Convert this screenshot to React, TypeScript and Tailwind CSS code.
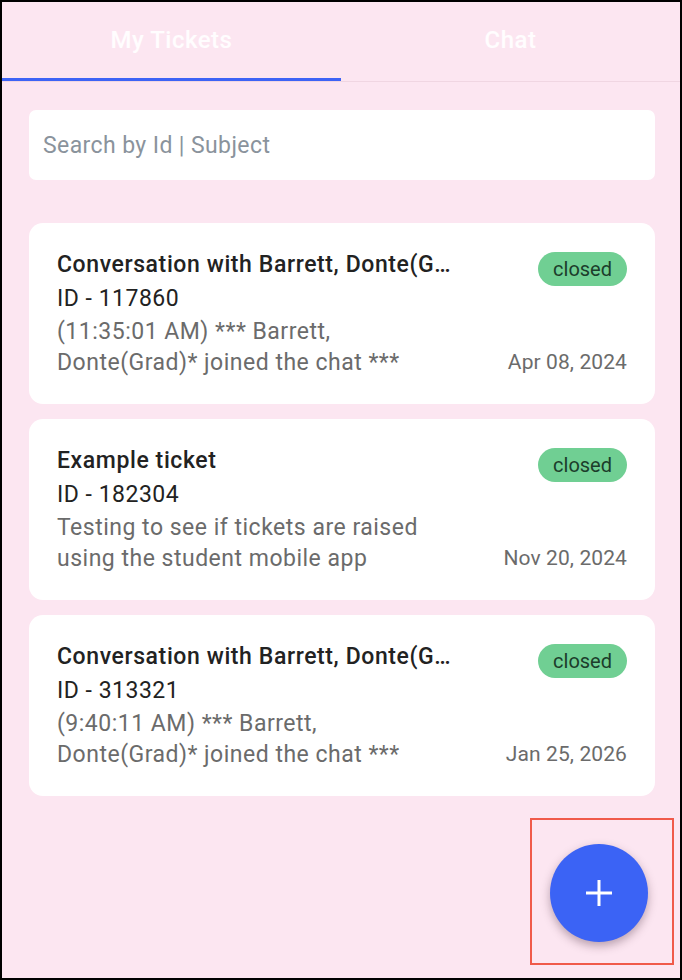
import { useState } from "react";

const tickets = [
  {
    id: "117860",
    subject: "Conversation with Barrett, Donte(Grad)",
    preview: "(11:35:01 AM) *** Barrett, Donte(Grad)* joined the chat ***",
    status: "closed",
    date: "Apr 08, 2024",
  },
  {
    id: "182304",
    subject: "Example ticket",
    preview: "Testing to see if tickets are raised using the student mobile app",
    status: "closed",
    date: "Nov 20, 2024",
  },
  {
    id: "313321",
    subject: "Conversation with Barrett, Donte(Grad)",
    preview: "(9:40:11 AM) *** Barrett, Donte(Grad)* joined the chat ***",
    status: "closed",
    date: "Jan 25, 2026",
  },
];

export default function App() {
  const [tab, setTab] = useState("tickets");
  const [query, setQuery] = useState("");

  return (
    <div
      className="relative w-[682px] h-[980px] border-2 border-black bg-[#fce6f1] overflow-hidden"
      style={{ fontFamily: "Roboto, 'Liberation Sans', sans-serif" }}
    >
      {/* tabs */}
      <div className="flex border-b border-[#f0d6e2]">
        {[
          { key: "tickets", label: "My Tickets" },
          { key: "chat", label: "Chat" },
        ].map((t) => (
          <button
            key={t.key}
            onClick={() => setTab(t.key)}
            className="flex-1 flex flex-col"
          >
            <span className="h-[76px] flex items-center justify-center text-[24px] tracking-[0.5px] font-medium text-white/90">
              {t.label}
            </span>
            <span className={`h-[3px] w-full ${tab === t.key ? "bg-[#3d63f5]" : "bg-transparent"}`} />
          </button>
        ))}
      </div>

      {/* search */}
      <div className="ml-[27px] mr-[25px] mt-[28px]">
        <input
          value={query}
          onChange={(e) => setQuery(e.target.value)}
          placeholder="Search by Id | Subject"
          className="w-full h-[70px] rounded-[7px] bg-white px-[14px] text-[23px] tracking-[0.4px] text-[#333] placeholder:text-[#8a939c] outline-none"
        />
      </div>

      {/* ticket list */}
      <div className="ml-[27px] mr-[25px] mt-[43px] flex flex-col gap-[15px]">
        {tickets.map((t) => (
          <div key={t.id} className="bg-white rounded-[14px] px-[28px] pt-[26px] pb-[26px] flex gap-4">
            <div className="flex-1 min-w-0">
              <p className="w-[398px] truncate text-[23px] tracking-[0.6px] leading-[32px] font-medium text-[#222]">{t.subject}</p>
              <p className="mt-[2px] text-[23px] tracking-[0.5px] leading-[32px] text-[#222]">ID - {t.id}</p>
              <p className="mt-px w-[400px] text-[23px] tracking-[0.5px] leading-[31px] text-[#6b6b6b]">{t.preview}</p>
            </div>
            <div className="flex flex-col items-end justify-between">
              <span className="mt-[3px] h-[34px] px-[15px] rounded-full bg-[#70cf93] text-[20px] leading-[34px] text-[#1c3d2b]">
                {t.status}
              </span>
              <span className="text-[21px] tracking-[0.1px] leading-[31px] text-[#6b6b6b]">{t.date}</span>
            </div>
          </div>
        ))}
      </div>

      {/* floating add button */}
      <button className="absolute left-[548px] top-[842px] w-[98px] h-[98px] rounded-full bg-[#3b63f5] shadow-[0_4px_10px_rgba(60,30,50,0.35)] flex items-center justify-center">
        <svg width="30" height="30" viewBox="0 0 30 30">
          <path d="M15 2v26M2 15h26" stroke="white" strokeWidth="3" />
        </svg>
      </button>
      <div className="absolute left-[528px] top-[816px] w-[144px] h-[147px] border-2 border-[#f05a4a] pointer-events-none" />
    </div>
  );
}
